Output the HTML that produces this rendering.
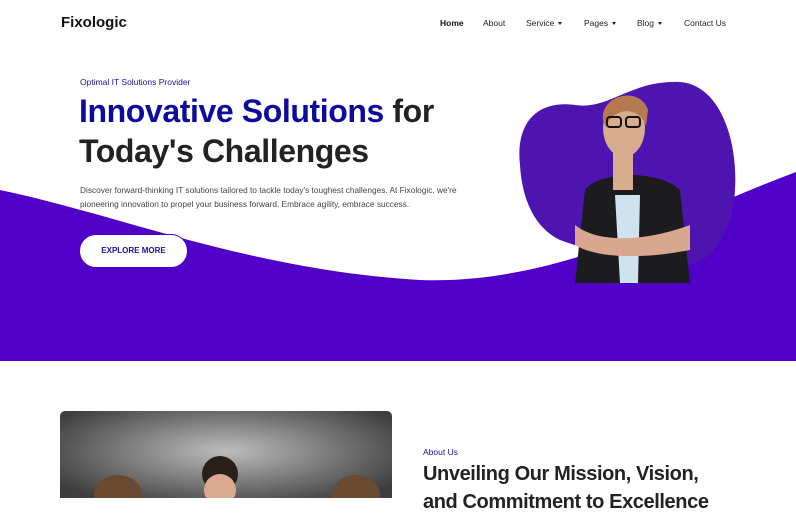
<!DOCTYPE html>
<html><head><meta charset="utf-8"><style>
*{margin:0;padding:0;box-sizing:border-box}
body{width:796px;height:498px;overflow:hidden;background:#fff;font-family:"Liberation Sans",sans-serif;position:relative}
.abs{position:absolute}
.nav a{position:absolute;top:18px;font-size:8.5px;color:#222;text-decoration:none}
.car{display:inline-block;border-left:2.5px solid transparent;border-right:2.5px solid transparent;border-top:3px solid #222;margin-left:4px;vertical-align:middle}
</style></head><body>
<svg class="abs" style="left:0;top:0" width="796" height="498">
<defs><clipPath id="c"><rect x="60" y="411" width="332" height="100" rx="5"/></clipPath>
<radialGradient id="g" cx="0.5" cy="0.4" r="0.6"><stop offset="0" stop-color="#bdbdbd"/><stop offset="1" stop-color="#3e3e3e"/></radialGradient></defs>
<path d="M0 190 C120 215 250 270 420 280 C560 285 680 215 796 172 L796 361 L0 361 Z" fill="#5000c8"/>
<path d="M520 165 C515 120 540 100 575 105 C610 110 630 80 680 82 C720 85 738 140 735 190 C732 240 705 270 675 265 C640 260 600 255 560 240 C535 228 522 200 520 165Z" fill="#4d14b0"/>
<g clip-path="url(#c)">
<rect x="60" y="411" width="332" height="100" fill="url(#g)"/>
<ellipse cx="220" cy="474" rx="18" ry="18" fill="#2a1f18"/>
<ellipse cx="220" cy="490" rx="16" ry="16" fill="#d8a890"/>
<ellipse cx="118" cy="495" rx="24" ry="20" fill="#6a4a30"/>
<ellipse cx="356" cy="495" rx="24" ry="20" fill="#6a4a30"/>
</g>
<!-- woman -->
<path d="M585 190 C600 170 660 170 680 190 L690 283 L575 283 Z" fill="#1c1c1e"/>
<path d="M615 195 L640 195 L638 283 L620 283 Z" fill="#cfe3ee"/>
<path d="M575 225 C600 245 650 240 690 225 L690 250 C650 258 600 260 575 245 Z" fill="#d9a690"/>
<rect x="613" y="150" width="20" height="40" fill="#d8ad8e"/>
<ellipse cx="624" cy="128" rx="21" ry="29" fill="#d8ad8e"/>
<path d="M603 120 C600 95 640 85 648 110 L646 126 C640 106 612 106 606 128 Z" fill="#b57a50"/>
<rect x="607" y="117" width="14" height="10" rx="3" fill="none" stroke="#111" stroke-width="2"/>
<rect x="626" y="117" width="14" height="10" rx="3" fill="none" stroke="#111" stroke-width="2"/>
</svg>
<div class="abs" style="left:61px;top:14px;font-size:15px;font-weight:bold;color:#111">Fixologic</div>
<div class="nav">
<a style="left:440px;font-weight:bold;color:#111">Home</a>
<a style="left:483px">About</a>
<a style="left:526px">Service<span class="car"></span></a>
<a style="left:584px">Pages<span class="car"></span></a>
<a style="left:637px">Blog<span class="car"></span></a>
<a style="left:684px">Contact Us</a>
</div>
<div class="abs" style="left:80px;top:77px;font-size:8.5px;color:#1a0fa0">Optimal IT Solutions Provider</div>
<div class="abs" style="left:79px;top:91px;font-size:32px;font-weight:bold;line-height:40px;color:#222;letter-spacing:-0.4px"><span style="color:#0d0aa0">Innovative Solutions</span> for<br>Today's Challenges</div>
<div class="abs" style="left:80px;top:184px;font-size:8.3px;line-height:13.5px;color:#444;width:400px">Discover forward-thinking IT solutions tailored to tackle today's toughest challenges. At Fixologic, we're pioneering innovation to propel your business forward. Embrace agility, embrace success.</div>
<div class="abs" style="left:79px;top:234px;width:109px;height:34px;border-radius:17px;background:#fff;border:1px solid #5000c8;font-size:8px;font-weight:bold;color:#1a0fa0;text-align:center;line-height:32px">EXPLORE MORE</div>
<div class="abs" style="left:423px;top:447px;font-size:8.5px;color:#1a0fa0">About Us</div>
<div class="abs" style="left:423px;top:460px;font-size:20px;font-weight:bold;line-height:28px;color:#222;letter-spacing:-0.4px;white-space:nowrap">Unveiling Our Mission, Vision,<br>and Commitment to Excellence</div>
</body></html>
